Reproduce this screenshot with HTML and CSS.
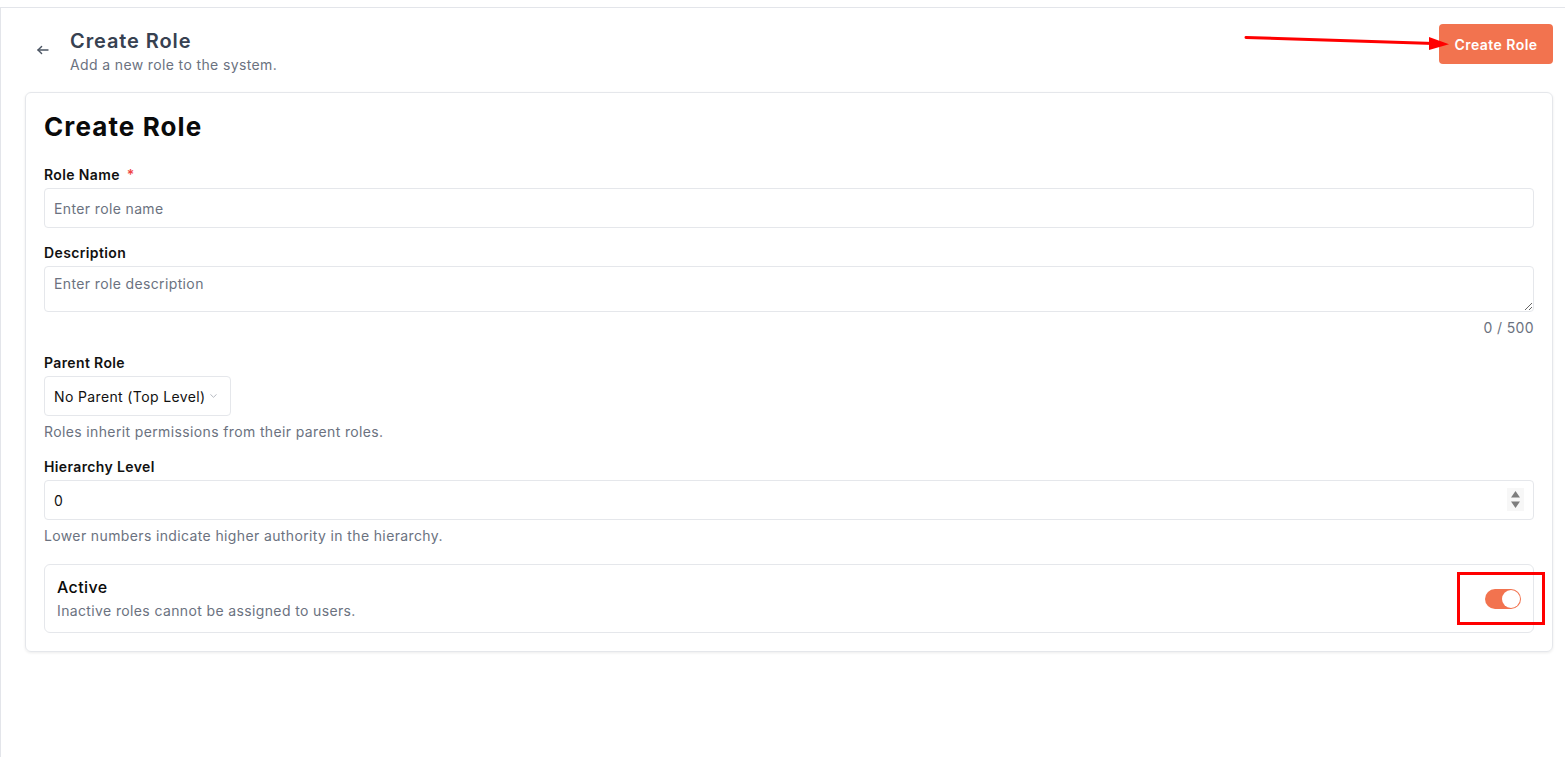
FILE: index.html
```html
<!DOCTYPE html>
<html lang="en">
<head>
    <meta charset="UTF-8">
    <meta name="viewport" content="width=device-width, initial-scale=1.0">
    <title>Create Role</title>
    <link rel="stylesheet" href="styles.css">
</head>
<body>
    <div class="topbar"></div>

    <main class="page">
        <div class="page-header">
            <div class="header-left">
                <button class="back-btn" aria-label="Back">
                    <svg width="12" height="10" viewBox="0 0 12 10" fill="none" stroke="#4b5563" stroke-width="1.4" stroke-linecap="round" stroke-linejoin="round">
                        <path d="M1 5H11"/>
                        <path d="M4.6 1.4L1 5l3.6 3.6"/>
                    </svg>
                </button>
                <div>
                    <h1 class="page-title">Create Role</h1>
                    <p class="page-subtitle">Add a new role to the system.</p>
                </div>
            </div>
            <button class="primary-btn">Create Role</button>
        </div>

        <section class="card">
            <h2 class="card-title">Create Role</h2>

            <div class="field">
                <label class="field-label" for="roleName">Role Name <span class="required">*</span></label>
                <input type="text" id="roleName" class="text-input" placeholder="Enter role name">
            </div>

            <div class="field">
                <label class="field-label" for="description">Description</label>
                <textarea id="description" class="text-input textarea" placeholder="Enter role description"></textarea>
                <div class="char-count">0 / 500</div>
            </div>

            <div class="field">
                <label class="field-label" for="parentRole">Parent Role</label>
                <div class="select-wrap">
                    <select id="parentRole" class="select-input">
                        <option>No Parent (Top Level)</option>
                    </select>
                    <svg class="select-chevron" width="7" height="4" viewBox="0 0 7 4" fill="none" stroke="#b5b9c0" stroke-width="1" stroke-linecap="round">
                        <path d="M0.7 0.6L3.5 3.3 6.3 0.6"/>
                    </svg>
                </div>
                <p class="help-text">Roles inherit permissions from their parent roles.</p>
            </div>

            <div class="field">
                <label class="field-label" for="hierarchy">Hierarchy Level</label>
                <div class="number-wrap">
                    <input type="number" id="hierarchy" class="text-input number-input" value="0">
                    <span class="spinner">
                        <svg width="11" height="19" viewBox="0 0 11 19" fill="#7d7d7d">
                            <path d="M5.5 1L10 7.5H1z"/>
                            <path d="M1 11.5h9L5.5 18z"/>
                        </svg>
                    </span>
                </div>
                <p class="help-text">Lower numbers indicate higher authority in the hierarchy.</p>
            </div>

            <div class="switch-row">
                <div>
                    <div class="switch-title">Active</div>
                    <div class="switch-desc">Inactive roles cannot be assigned to users.</div>
                </div>
                <span class="toggle is-on"><span class="toggle-knob"></span></span>
            </div>
        </section>
    </main>

    <!-- annotations drawn over the screenshot -->
    <svg class="annot-arrow" width="220" height="20" viewBox="0 0 220 20">
        <path d="M2 3.5L190 9.5" stroke="#ff0000" stroke-width="3" stroke-linecap="round"/>
        <path d="M185 3L205 10.3 185 16z" fill="#ff0000"/>
    </svg>
    <div class="annot-box"></div>
</body>
</html>
```

FILE: styles.css
```css
* {
    margin: 0;
    padding: 0;
    box-sizing: border-box;
}

body {
    font-family: 'Inter', 'Liberation Sans', sans-serif;
    letter-spacing: 0.37px;
    background-color: #ffffff;
    color: #111111;
    min-height: 100vh;
}

.topbar {
    height: 8px;
    border-bottom: 1px solid #e3e5ea;
}

.page {
    border-left: 1px solid #e3e5ea;
    padding: 16px 12px 0 24px;
    min-height: calc(100vh - 8px);
}

.page-header {
    display: flex;
    justify-content: space-between;
    align-items: flex-start;
    margin-bottom: 17px;
}

.header-left {
    display: flex;
    align-items: flex-start;
    margin-top: 3px;
}

.back-btn {
    background: none;
    border: none;
    width: 12px;
    height: 10px;
    margin: 18px 21px 0 12px;
    display: flex;
    cursor: pointer;
}

.page-title {
    font-size: 20px;
    line-height: 28px;
    font-weight: 600;
    letter-spacing: 0.9px;
    color: #374151;
}

.page-subtitle {
    font-size: 14px;
    line-height: 20px;
    color: #6b7280;
}

.primary-btn {
    background-color: #f2734f;
    color: #ffffff;
    border: none;
    border-radius: 4px;
    height: 40px;
    width: 114px;
    font-family: inherit;
    font-size: 14px;
    font-weight: 600;
    letter-spacing: 0.45px;
    cursor: pointer;
}

.card {
    border: 1px solid #e5e7eb;
    border-radius: 6px;
    box-shadow: 0 1px 3px rgba(0, 0, 0, 0.08);
    padding: 18px;
}

.card-title {
    font-size: 26px;
    line-height: 32px;
    font-weight: 700;
    letter-spacing: 1.1px;
    color: #0a0a0a;
    margin-bottom: 22px;
}

.field {
    margin-bottom: 15px;
}

.field-label {
    display: block;
    font-size: 14px;
    line-height: 20px;
    font-weight: 600;
    color: #111111;
    margin-bottom: 3px;
}

.required {
    color: #ef4444;
    margin-left: 3px;
}

.text-input {
    display: block;
    width: 100%;
    height: 40px;
    border: 1px solid #e5e7eb;
    border-radius: 4px;
    padding: 0 9px;
    font-family: inherit;
    font-size: 14px;
    letter-spacing: inherit;
    color: #111111;
    background: #ffffff;
    outline: none;
}

.text-input::placeholder {
    color: #6b7280;
}

.textarea {
    height: 46px;
    padding: 7px 9px;
    line-height: 20px;
    resize: vertical;
}

.char-count {
    text-align: right;
    font-size: 14px;
    line-height: 20px;
    color: #6b7280;
    margin-top: 6px;
}

.select-wrap {
    position: relative;
    width: 187px;
}

.select-input {
    appearance: none;
    -webkit-appearance: none;
    width: 100%;
    height: 40px;
    border: 1px solid #e5e7eb;
    border-radius: 4px;
    padding: 0 20px 0 9px;
    font-family: inherit;
    font-size: 14px;
    letter-spacing: inherit;
    color: #111111;
    background: #ffffff;
    outline: none;
}

.select-chevron {
    position: absolute;
    right: 14px;
    top: 18px;
    pointer-events: none;
}

.help-text {
    font-size: 14px;
    line-height: 20px;
    color: #6b7280;
    margin-top: 6px;
}

.number-wrap {
    position: relative;
}

.number-input {
    -moz-appearance: textfield;
}

.number-input::-webkit-inner-spin-button,
.number-input::-webkit-outer-spin-button {
    -webkit-appearance: none;
    margin: 0;
}

.spinner {
    position: absolute;
    right: 10px;
    top: 8px;
    width: 17px;
    height: 23px;
    background: #f7f7f7;
    display: flex;
    align-items: center;
    justify-content: center;
}

.switch-row {
    display: flex;
    justify-content: space-between;
    align-items: center;
    border: 1px solid #e5e7eb;
    border-radius: 6px;
    padding: 11px 12px;
    margin-top: 18px;
}

.switch-title {
    font-size: 16px;
    line-height: 22px;
    font-weight: 500;
    color: #0a0a0a;
}

.switch-desc {
    font-size: 14px;
    line-height: 20px;
    color: #6b7280;
    margin-top: 3px;
}

.toggle {
    width: 36px;
    height: 20px;
    border-radius: 10px;
    background: #d1d5db;
    padding: 1px;
    display: flex;
}

.toggle.is-on {
    background: #f2734f;
    justify-content: flex-end;
}

.toggle-knob {
    width: 18px;
    height: 18px;
    border-radius: 50%;
    background: #ffffff;
}

.annot-arrow {
    position: absolute;
    left: 1244px;
    top: 34px;
}

.annot-box {
    position: absolute;
    left: 1457px;
    top: 572px;
    width: 88px;
    height: 53px;
    border: 3px solid #ff0000;
}
```
